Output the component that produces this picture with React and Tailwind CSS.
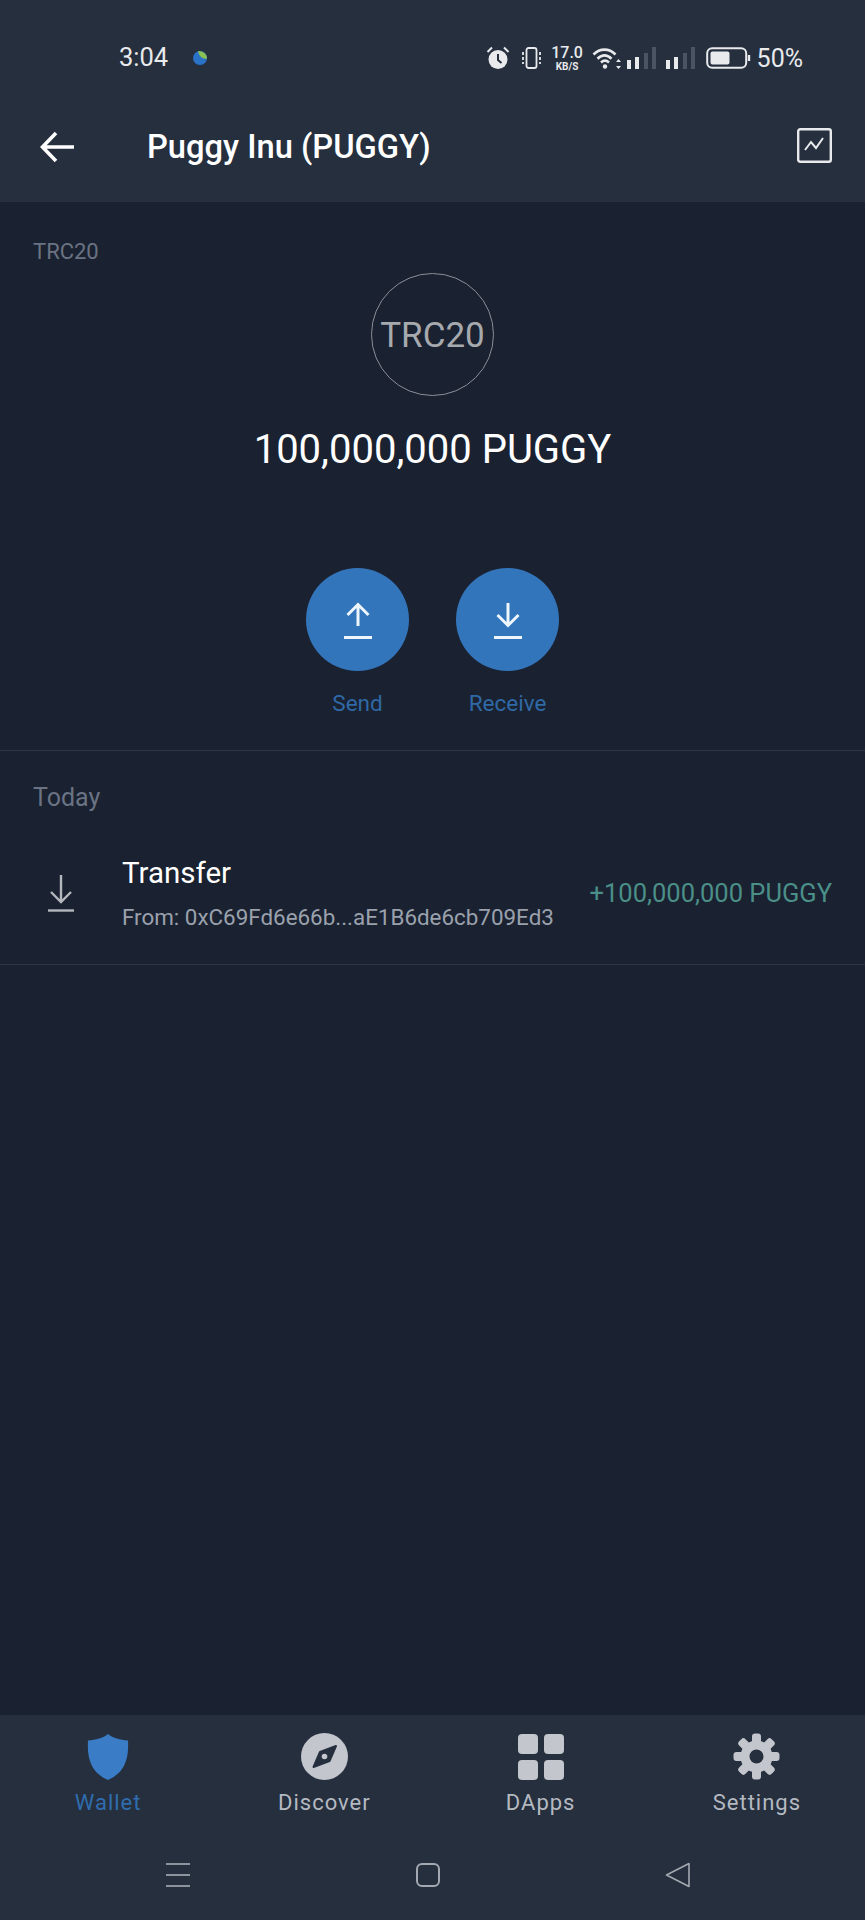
const font = { fontFamily: 'Roboto, "Liberation Sans", sans-serif' };

function Alarm() {
  return (
    <svg width="24" height="24" viewBox="0 0 24 24" className="shrink-0">
      <circle cx="12" cy="13.500" r="9.500" fill="#e8eaec" />
      <path d="M12 8v6l3.500 3" fill="none" stroke="#252f3e" strokeWidth="2" />
      <path d="M1.500 6 6 1.500M22.500 6 18 1.500" stroke="#e8eaec" strokeWidth="2" fill="none" />
    </svg>
  );
}

function Vibrate() {
  return (
    <svg width="21" height="22" viewBox="0 0 21 22" fill="none" stroke="#e8eaec" className="shrink-0">
      <rect x="5.500" y="1" width="10" height="20" rx="2" strokeWidth="1.800" />
      <path d="M2 5v3M2 10v3M2 15v2M19 5v3M19 10v3M19 15v2" strokeWidth="1.800" />
    </svg>
  );
}

function Wifi() {
  return (
    <svg width="30" height="24" viewBox="0 0 30 24" className="shrink-0">
      <path d="M1.500 8.500c6.500-6.500 15.500-6.500 22 0M5.500 12.800c4.500-4.300 9.500-4.300 14 0M9 16.500c2.500-2.300 5.500-2.300 8 0" fill="none" stroke="#e8eaec" strokeWidth="2.600" />
      <circle cx="13" cy="20.500" r="2.200" fill="#e8eaec" />
      <path d="M26.500 13l2.500 3h-5zM26.500 23l2.500-3h-5z" fill="#e8eaec" />
    </svg>
  );
}

function Signal() {
  return (
    <svg width="30" height="22" viewBox="0 0 30 22" className="shrink-0">
      <rect x="0" y="13" width="4" height="9" fill="#e8eaec" />
      <rect x="8" y="10" width="4" height="12" fill="#e8eaec" />
      <rect x="17" y="6" width="4" height="16" fill="#4a5462" />
      <rect x="25" y="0" width="4" height="22" fill="#4a5462" />
    </svg>
  );
}

function Battery() {
  return (
    <svg width="45" height="22" viewBox="0 0 45 22" className="shrink-0">
      <rect x="1.200" y="1.200" width="39" height="19.600" rx="5" fill="none" stroke="#e8eaec" strokeWidth="2" />
      <rect x="4.500" y="4.500" width="19" height="13" rx="2" fill="#e8eaec" />
      <path d="M43 8v6" stroke="#e8eaec" strokeWidth="2.400" />
    </svg>
  );
}

function ActionButton({ label, up }) {
  return (
    <div className="flex flex-col items-center w-[103px]">
      <div className="w-[103px] h-[103px] rounded-full bg-[#3375bb] flex items-center justify-center">
        <svg width="32" height="40" viewBox="0 0 32 40" fill="none" stroke="#eef6fb" strokeWidth="3">
          {up ? (
            <path d="M16 26V5M5.500 15 16 4.500 26.500 15" />
          ) : (
            <path d="M16 3v22M5.500 15 16 25.500 26.500 15" />
          )}
          <path d="M2 37.500h28" />
        </svg>
      </div>
      <div className="mt-[19px] text-[22.500px] leading-[26px] text-[#2f69a6] whitespace-nowrap">{label}</div>
    </div>
  );
}

function Shield() {
  return (
    <svg width="42" height="46" viewBox="0 0 42 46">
      <path d="M21 0c5 4 12 6 20 6.500 1 18-3 32-20 39.500C4 38.500 0 24.500 1 6.500 9 6 16 4 21 0z" fill="#3a7cc6" />
    </svg>
  );
}

function Compass() {
  return (
    <svg width="47" height="47" viewBox="0 0 47 47">
      <circle cx="23.500" cy="23.500" r="23.500" fill="#c3c6cc" />
      <path d="M35 13 28.500 28 12.500 34 19 19z" fill="#252f3e" stroke="#252f3e" strokeWidth="2" strokeLinejoin="round" />
      <circle cx="23.500" cy="23.500" r="2.800" fill="#c3c6cc" />
    </svg>
  );
}

function Apps() {
  return (
    <div className="grid grid-cols-2 gap-[6px] w-[46px]">
      <div className="h-[20px] rounded-[4px] bg-[#c3c6cc]" />
      <div className="h-[20px] rounded-[4px] bg-[#c3c6cc]" />
      <div className="h-[20px] rounded-[4px] bg-[#c3c6cc]" />
      <div className="h-[20px] rounded-[4px] bg-[#c3c6cc]" />
    </div>
  );
}

function Gear() {
  const teeth = [0, 45, 90, 135, 180, 225, 270, 315];
  return (
    <svg width="47" height="47" viewBox="0 0 47 47">
      {teeth.map((a) => (
        <rect key={a} x="19" y="0.500" width="9" height="12" rx="3" fill="#c3c6cc" transform={`rotate(${a} 23.500 23.500)`} />
      ))}
      <circle cx="23.500" cy="23.500" r="11.500" fill="none" stroke="#c3c6cc" strokeWidth="9" />
    </svg>
  );
}

function NavItem({ icon, label, active }) {
  return (
    <div className="flex flex-col items-center">
      <div className="h-[47px] flex items-center justify-center">{icon}</div>
      <div className={`mt-[10px] text-[22px] leading-[26px] tracking-[1px] ${active ? 'text-[#2f6dae]' : 'text-[#b4b9c1]'}`}>{label}</div>
    </div>
  );
}

export default function App() {
  return (
    <div style={font} className="w-[865px] h-[1920px] flex flex-col bg-[#1a2130] overflow-hidden">
      <header className="h-[202px] shrink-0 bg-[#252f3e] flex flex-col">
        <div className="h-[92px] pt-[24px] pl-[119px] pr-[62px] flex items-center text-[#e8eaec]">
          <span className="text-[25.500px] leading-none">3:04</span>
          <svg width="16" height="16" viewBox="0 0 16 16" className="ml-[24px]">
            <circle cx="8" cy="8" r="7" fill="#2a72c8" />
            <path d="M6 1c5 0 9 3 9 7.500-4 1-8-2-9-7.500z" fill="#8cc152" />
          </svg>
          <div className="ml-auto flex items-center">
            <Alarm />
            <div className="ml-[11px]"><Vibrate /></div>
            <div className="ml-[11px] flex flex-col items-center w-[29px]">
              <span className="text-[16px] leading-[16px] font-medium">17.0</span>
              <span className="text-[10px] leading-[11px] font-bold">KB/S</span>
            </div>
            <div className="ml-[10px]"><Wifi /></div>
            <div className="ml-[5px]"><Signal /></div>
            <div className="ml-[9px]"><Signal /></div>
            <div className="ml-[10px]"><Battery /></div>
            <span className="ml-[6px] text-[25px] leading-none">50%</span>
          </div>
        </div>
        <div className="h-[110px] flex items-center pl-[40px] pr-[33px] text-white">
          <svg width="34" height="32" viewBox="0 0 34 32" fill="none" stroke="#fff" strokeWidth="3.600">
            <path d="M34 16H3M16 2 2.500 16 16 30" />
          </svg>
          <span className="ml-[73px] text-[32.700px] leading-none font-medium whitespace-nowrap">Puggy Inu (PUGGY)</span>
          <svg width="35" height="35" viewBox="0 0 35 35" fill="none" stroke="#e8eaec" className="ml-auto mb-[4px]">
            <rect x="1.200" y="1.200" width="32.600" height="32.600" rx="2" strokeWidth="2.400" />
            <path d="M8 22l6-8 5 6 7-10" strokeWidth="2" />
          </svg>
        </div>
      </header>

      <main className="flex-1 flex flex-col">
        <section className="pt-[38px] pb-[34px] border-b border-[#2d3645] flex flex-col">
          <div className="pl-[33px] text-[22px] leading-[24px] text-[#6a7383]">TRC20</div>
          <div className="mt-[9px] self-center w-[123px] h-[123px] pt-[4px] rounded-full border border-[#8a8f98] flex items-center justify-center text-[35px] text-[#a6a9ae]">TRC20</div>
          <div className="mt-[30px] text-center text-[40px] leading-[48px] text-white">100,000,000 PUGGY</div>
          <div className="mt-[94px] flex justify-center gap-[47px]">
            <ActionButton label="Send" up />
            <ActionButton label="Receive" />
          </div>
        </section>

        <div className="pt-[33px] pl-[33px] text-[25px] leading-[28px] text-[#6a7383]">Today</div>
        <div className="h-[153px] pt-[10px] pl-[48px] pr-[33px] flex items-center border-b border-[#2d3645]">
          <svg width="26" height="37" viewBox="0 0 26 37" fill="none" stroke="#b4b7bc" strokeWidth="2.400">
            <path d="M13 0v27M3 17l10 10 10-10" />
            <path d="M0 35.500h26" />
          </svg>
          <div className="ml-[48px] flex flex-col">
            <span className="text-[29.500px] leading-[36px] text-white">Transfer</span>
            <span className="mt-[12px] text-[22.400px] leading-[28px] text-[#9aa1ad] whitespace-nowrap">From: 0xC69Fd6e66b...aE1B6de6cb709Ed3</span>
          </div>
          <span className="ml-auto text-[25.500px] leading-[28px] text-[#4a8f88] whitespace-nowrap">+100,000,000 PUGGY</span>
        </div>
      </main>

      <nav className="h-[205px] shrink-0 bg-[#252f3e] flex flex-col">
        <div className="grid grid-cols-4 pt-[18px]">
          <NavItem icon={<Shield />} label="Wallet" active />
          <NavItem icon={<Compass />} label="Discover" />
          <NavItem icon={<Apps />} label="DApps" />
          <NavItem icon={<Gear />} label="Settings" />
        </div>
        <div className="mt-[46px] grid grid-cols-3 pl-[53px] pr-[62px] justify-items-center">
          <svg width="26" height="26" viewBox="0 0 26 26" stroke="#8d939d" strokeWidth="2" fill="none">
            <path d="M1 2h24M1 13h24M1 24h24" />
          </svg>
          <svg width="26" height="26" viewBox="0 0 26 26" stroke="#a4a9b1" strokeWidth="2" fill="none">
            <rect x="2" y="2" width="22" height="22" rx="5" />
          </svg>
          <svg width="26" height="26" viewBox="0 0 26 26" stroke="#a4a9b1" strokeWidth="1.600" fill="none" strokeLinejoin="round">
            <path d="M24 1.500v23L1.500 13z" />
          </svg>
        </div>
      </nav>
    </div>
  );
}
